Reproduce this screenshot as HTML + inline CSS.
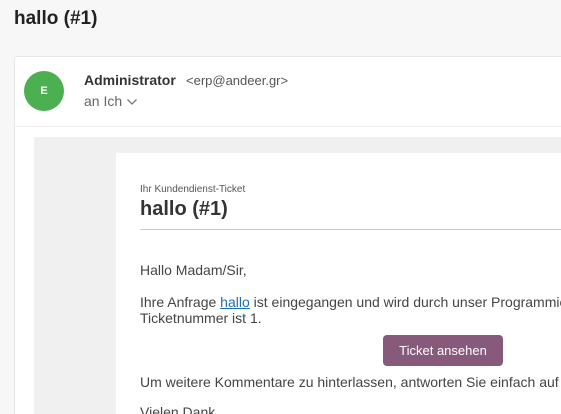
<!DOCTYPE html><html><head><style>
html,body{margin:0;width:561px;height:414px;overflow:hidden}
body{background:#f7f7f7;font-family:"Liberation Sans",sans-serif;position:relative;color:#333}
.a{position:absolute;white-space:nowrap}
</style></head><body>
<div class="a" style="left:14px;top:8px;font-size:19px;color:#222;font-weight:bold">hallo (#1)</div>
<div class="a" style="left:14px;top:56px;width:547px;height:358px;background:#fff;border-left:1px solid #e6e6e6;border-top:1px solid #e6e6e6;border-radius:3px 0 0 0"></div>
<div class="a" style="left:15px;top:126px;width:546px;height:1px;background:#eee"></div>
<div class="a" style="left:24px;top:71px;width:40px;height:40px;border-radius:50%;background:#4caf50;color:#fff;font-size:11px;font-weight:bold;text-align:center;line-height:40px">E</div>
<div class="a" style="left:84px;top:72px;font-size:14px;font-weight:bold;color:#333">Administrator</div>
<div class="a" style="left:186px;top:73px;font-size:13px;color:#555">&lt;erp@andeer.gr&gt;</div>
<div class="a" style="left:84px;top:93px;font-size:14px;color:#666">an Ich <svg width="12" height="8" viewBox="0 0 12 8" style="vertical-align:middle"><path d="M1.5 1.5L6 6L10.5 1.5" fill="none" stroke="#777" stroke-width="1.3"/></svg></div>
<div class="a" style="left:34px;top:137px;width:527px;height:277px;background:#f0f0f0"></div>
<div class="a" style="left:116px;top:153px;width:445px;height:261px;background:#fff;overflow:hidden"></div>
<div class="a" style="left:140px;top:184px;font-size:10px;color:#555">Ihr Kundendienst-Ticket</div>
<div class="a" style="left:140px;top:198px;font-size:20px;font-weight:bold;color:#333">hallo (#1)</div>
<div class="a" style="left:140px;top:229px;width:421px;height:1px;background:#ccc"></div>
<div class="a" style="left:140px;top:262px;font-size:14px;color:#444">Hallo Madam/Sir,</div>
<div class="a" style="left:140px;top:294px;width:421px;overflow:hidden;font-size:14px;color:#444;line-height:16px">Ihre Anfrage <span style="color:#1a6fb5;text-decoration:underline">hallo</span> ist eingegangen und wird durch unser Programmier-Team<br>Ticketnummer ist 1.</div>
<div class="a" style="left:383px;top:335px;width:120px;height:31px;background:#875a7b;border-radius:4px;color:#fff;font-size:13px;text-align:center;line-height:31px">Ticket ansehen</div>
<div class="a" style="left:140px;top:374px;width:421px;overflow:hidden;font-size:14px;color:#444">Um weitere Kommentare zu hinterlassen, antworten Sie einfach auf diese</div>
<div class="a" style="left:140px;top:404px;font-size:14px;color:#444">Vielen Dank,</div>
</body></html>
